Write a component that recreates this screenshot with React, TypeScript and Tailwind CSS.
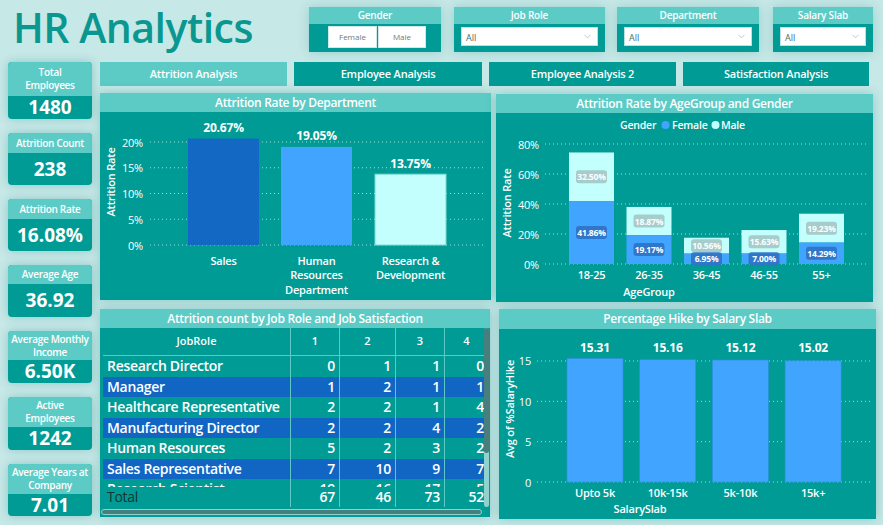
import { ChevronDown } from "lucide-react";

const kpis = [
  { label: ["Total", "Employees"], value: "1480", card: "h-[57px]", head: "h-[34px]" },
  { label: ["Attrition Count"], value: "238", card: "h-[52px]", head: "h-[20px]" },
  { label: ["Attrition Rate"], value: "16.08%", card: "h-[52px]", head: "h-[20px]" },
  { label: ["Average Age"], value: "36.92", card: "h-[52px]", head: "h-[19px]" },
  { label: ["Average Monthly", "Income"], value: "6.50K", card: "h-[52px]", head: "h-[29px]" },
  { label: ["Active", "Employees"], value: "1242", card: "h-[53px]", head: "h-[30px]" },
  { label: ["Average Years at", "Company"], value: "7.01", card: "h-[52px]", head: "h-[30px]" },
];

const tableRows = [
  { role: "Research Director", v: [0, 1, 1, 0] },
  { role: "Manager", v: [1, 2, 1, 1] },
  { role: "Healthcare Representative", v: [2, 2, 1, 4] },
  { role: "Manufacturing Director", v: [2, 2, 4, 2] },
  { role: "Human Resources", v: [5, 2, 3, 2] },
  { role: "Sales Representative", v: [7, 10, 9, 7] },
  { role: "Research Scientist", v: [19, 16, 17, 5] },
];

function Filter({ label, width, children }: { label: string; width: string; children: React.ReactNode }) {
  return (
    <div className={`${width} h-[45px] flex flex-col shadow-[0_0_10px_rgba(0,130,125,0.25)]`}>
      <div className="h-[17px] bg-[#5ccbc6] text-white text-[10px] font-semibold tracking-[-0.2px] flex items-center justify-center">{label}</div>
      <div className="flex-1 bg-[#019b95] px-[7px] pt-[3px]">{children}</div>
    </div>
  );
}

function Dropdown() {
  return (
    <div className="h-[19px] bg-white border border-[#b9e3e1] flex items-center justify-between pl-[4px] pr-[4px]">
      <span className="text-[9px] text-[#3f6f6f] mt-[2px]">All</span>
      <ChevronDown className="w-[11px] h-[11px] text-[#9ab8b8]" strokeWidth={1.5} />
    </div>
  );
}

function Panel({ title, className, head, children }: { title: string; className: string; head: string; children: React.ReactNode }) {
  return (
    <div className={`${className} flex flex-col bg-[#019b95] shadow-[0_0_10px_rgba(0,130,125,0.3)]`}>
      <div className={`${head} bg-[#5ccbc6] text-white text-[12px] font-semibold tracking-[-0.3px] flex items-center justify-center shrink-0`}>{title}</div>
      <div className="flex-1 relative">{children}</div>
    </div>
  );
}

function DeptChart() {
  const y0 = 133;
  const k = 5.15;
  const bars = [
    { x: 88, v: 20.67, fill: "#1268c3", lines: ["Sales"] },
    { x: 181, v: 19.05, fill: "#41a4ff", lines: ["Human", "Resources", "Department"] },
    { x: 275, v: 13.75, fill: "#c2fffd", lines: ["Research &", "Development"] },
  ];
  return (
    <svg width="391" height="187" className="block tracking-[-0.2px]">
      <text transform="translate(10,70) rotate(-90)" textAnchor="middle" dominantBaseline="central" fill="white" fontSize="11" fontWeight="600">Attrition Rate</text>
      {[0, 5, 10, 15, 20].map((t) => (
        <g key={t}>
          <line x1="50" x2="386" y1={y0 - t * k} y2={y0 - t * k} stroke="#9fdcd8" strokeDasharray="1 3" />
          <text x="43" y={y0 - t * k} textAnchor="end" dominantBaseline="central" fill="white" fontSize="11">{t}%</text>
        </g>
      ))}
      {bars.map((b) => (
        <g key={b.x}>
          <rect x={b.x} y={y0 - b.v * k} width="71" height={b.v * k} fill={b.fill} stroke={b.fill === "#c2fffd" ? "#7fd9d4" : "none"} />
          <text x={b.x + 35.5} y={y0 - b.v * k - 11} textAnchor="middle" dominantBaseline="central" fill="white" fontSize="12" fontWeight="700">{b.v.toFixed(2)}%</text>
          {b.lines.map((l, i) => (
            <text key={l} x={b.x + 35.5} y={148 + i * 14.5} textAnchor="middle" dominantBaseline="central" fill="white" fontSize="11" fontWeight="600">{l}</text>
          ))}
        </g>
      ))}
    </svg>
  );
}

function AgeChart() {
  const y0 = 151;
  const k = 1.5;
  const groups = [
    { g: "18-25", f: 41.86, m: 32.5 },
    { g: "26-35", f: 19.17, m: 18.87 },
    { g: "36-45", f: 6.95, m: 10.56 },
    { g: "46-55", f: 7.0, m: 15.63 },
    { g: "55+", f: 14.29, m: 19.23 },
  ];
  return (
    <svg width="377" height="188" className="block tracking-[-0.2px]">
      <text x="124" y="12" dominantBaseline="central" fill="white" fontSize="10.5" fontWeight="600">Gender</text>
      <circle cx="169.5" cy="12" r="4" fill="#41a4ff" />
      <text x="176" y="12" dominantBaseline="central" fill="white" fontSize="10.5" fontWeight="600">Female</text>
      <circle cx="219.5" cy="12" r="4" fill="#c2fffd" />
      <text x="225" y="12" dominantBaseline="central" fill="white" fontSize="10.5" fontWeight="600">Male</text>
      <text transform="translate(10,90) rotate(-90)" textAnchor="middle" dominantBaseline="central" fill="white" fontSize="11" fontWeight="600">Attrition Rate</text>
      {[0, 20, 40, 60, 80].map((t) => (
        <g key={t}>
          <line x1="49" x2="373" y1={y0 - t * k} y2={y0 - t * k} stroke="#9fdcd8" strokeDasharray="1 3" />
          <text x="43" y={y0 - t * k} textAnchor="end" dominantBaseline="central" fill="white" fontSize="11">{t}%</text>
        </g>
      ))}
      {groups.map((d, i) => {
        const x = 73 + i * 57.5;
        const fTop = y0 - d.f * k;
        const mTop = fTop - d.m * k;
        return (
          <g key={d.g}>
            <rect x={x} y={mTop} width="45" height={d.m * k} fill="#c2fffd" />
            <rect x={x} y={fTop} width="45" height={d.f * k} fill="#41a4ff" />
            <rect x={x + 7} y={(mTop + fTop) / 2 - 6.5} width="31" height="13" rx="3" fill="#a3c6c6" fillOpacity="0.9" />
            <text x={x + 22.5} y={(mTop + fTop) / 2} textAnchor="middle" dominantBaseline="central" fill="white" fontSize="8.5" fontWeight="700">{d.m.toFixed(2)}%</text>
            <rect x={x + 7} y={(fTop + y0) / 2 - 6.5} width="31" height="13" rx="3" fill="#2f72c4" fillOpacity="0.9" />
            <text x={x + 22.5} y={(fTop + y0) / 2} textAnchor="middle" dominantBaseline="central" fill="white" fontSize="8.5" fontWeight="700">{d.f.toFixed(2)}%</text>
            <text x={x + 22.5} y="161" textAnchor="middle" dominantBaseline="central" fill="white" fontSize="11" fontWeight="600">{d.g}</text>
          </g>
        );
      })}
      <text x="153" y="178" textAnchor="middle" dominantBaseline="central" fill="white" fontSize="11" fontWeight="600">AgeGroup</text>
    </svg>
  );
}

function HikeChart() {
  const y0 = 153;
  const k = 8.067;
  const bars = [
    { s: "Upto 5k", v: 15.31 },
    { s: "10k-15k", v: 15.16 },
    { s: "5k-10k", v: 15.12 },
    { s: "15k+", v: 15.02 },
  ];
  return (
    <svg width="377" height="190" className="block tracking-[-0.2px]">
      <text transform="translate(10,80) rotate(-90)" textAnchor="middle" dominantBaseline="central" fill="white" fontSize="11" fontWeight="600">Avg of %SalaryHike</text>
      {[0, 5, 10, 15].map((t) => (
        <g key={t}>
          <line x1="38" x2="371" y1={y0 - t * k} y2={y0 - t * k} stroke="#9fdcd8" strokeDasharray="1 3" />
          <text x="32" y={y0 - t * k} textAnchor="end" dominantBaseline="central" fill="white" fontSize="11">{t}</text>
        </g>
      ))}
      {bars.map((b, i) => {
        const x = 68 + i * 72.7;
        return (
          <g key={b.s}>
            <rect x={x} y={y0 - b.v * k} width="56" height={b.v * k} fill="#41a4ff" stroke="#2f8fe0" strokeWidth="0.6" />
            <text x={x + 28} y="18" textAnchor="middle" dominantBaseline="central" fill="white" fontSize="12" fontWeight="700">{b.v.toFixed(2)}</text>
            <text x={x + 28} y="163" textAnchor="middle" dominantBaseline="central" fill="white" fontSize="11" fontWeight="600">{b.s}</text>
          </g>
        );
      })}
      <text x="141" y="179" textAnchor="middle" dominantBaseline="central" fill="white" fontSize="11" fontWeight="600">SalarySlab</text>
    </svg>
  );
}

function JobTable() {
  return (
    <div className="absolute inset-0 pl-[3px]">
      <div className="flex">
        <div className="w-[381px] h-[179px] overflow-hidden">
          <div className="grid grid-cols-[187px_49px_56px_49px_44px] h-[28px] border-b border-[#5cc9c4] text-white text-[11px] font-semibold">
            <div className="flex items-center justify-center">JobRole</div>
            {[1, 2, 3, 4].map((c) => (
              <div key={c} className="flex items-center justify-center border-l border-[#5cc9c4]">{c}</div>
            ))}
          </div>
          <div className="h-[131px] overflow-hidden">
            {tableRows.map((r, i) => (
              <div key={r.role} className={`grid grid-cols-[187px_49px_56px_49px_44px] h-[20.5px] text-white text-[14px] font-semibold tracking-[-0.3px] leading-none whitespace-nowrap ${i % 2 === 1 ? "bg-[#1166c4]" : ""}`}>
                <div className="flex items-center pl-[4px]">{r.role}</div>
                {r.v.map((n, j) => (
                  <div key={j} className="flex items-center justify-end pr-[4px] border-l border-[#5cc9c4]">{n}</div>
                ))}
              </div>
            ))}
          </div>
          <div className="grid grid-cols-[187px_49px_56px_49px_44px] h-[20px] text-[14px] tracking-[-0.3px] leading-none">
            <div className="flex items-center pl-[4px] text-[#163434]">Total</div>
            {[67, 46, 73, 52].map((n) => (
              <div key={n} className="flex items-center justify-end pr-[4px] border-l border-[#5cc9c4] text-white font-semibold">{n}</div>
            ))}
          </div>
        </div>
        <div className="w-[5px] h-[179px] rounded-full bg-[#8fd3cf] flex flex-col">
          <div className="h-[125px] rounded-full bg-[#467f7e]" />
        </div>
      </div>
      <div className="mt-[2px] w-[381px] h-[6px] rounded-full bg-[#467f7e] border border-[#8fd3cf] -ml-[2px]" />
    </div>
  );
}

export default function App() {
  return (
    <div className="w-[883px] h-[525px] overflow-hidden bg-[#c6e8e7] font-['Open_Sans',sans-serif]">
      <div className="h-[62px] flex items-start">
        <div className="w-[309px] pl-[13px] pt-[2px] text-[41px] leading-[50px] font-semibold text-[#0a9790] tracking-[-0.5px] whitespace-nowrap">HR Analytics</div>
        <div className="flex pt-[7px]">
          <Filter label="Gender" width="w-[132px]">
            <div className="flex justify-center gap-[1px] -mt-[1px] ml-[4px]">
              <div className="w-[49px] h-[22px] bg-white border border-[#cfe9e8] flex items-center justify-center text-[8px] text-[#6b7c7c]">Female</div>
              <div className="w-[48px] h-[22px] bg-white border border-[#cfe9e8] flex items-center justify-center text-[8px] text-[#6b7c7c]">Male</div>
            </div>
          </Filter>
          <div className="w-[13px]" />
          <Filter label="Job Role" width="w-[151px]">
            <Dropdown />
          </Filter>
          <div className="w-[12px]" />
          <Filter label="Department" width="w-[142px]">
            <Dropdown />
          </Filter>
          <div className="w-[14px]" />
          <Filter label="Salary Slab" width="w-[100px]">
            <Dropdown />
          </Filter>
        </div>
      </div>

      <div className="flex gap-[8px] pl-[8px]">
        <div className="w-[84px] flex flex-col gap-[14px]">
          {kpis.map((k) => (
            <div key={k.value} className={`${k.card} rounded-[4px] overflow-hidden flex flex-col bg-[#019b95] shadow-[0_0_10px_rgba(0,130,125,0.3)]`}>
              <div className={`${k.head} bg-[#5ccbc6] text-white text-[10px] font-semibold tracking-[-0.3px] leading-[13px] text-center flex flex-col items-center justify-center`}>
                {k.label.map((l) => (
                  <span key={l}>{l}</span>
                ))}
              </div>
              <div className="flex-1 flex items-center justify-center text-white text-[19px] font-bold leading-none">{k.value}</div>
            </div>
          ))}
        </div>

        <div className="w-[776px] flex flex-col">
          <div className="flex gap-[7px] h-[24px]">
            <div className="w-[187px] bg-[#5ccbc6] text-white text-[11px] font-semibold tracking-[-0.2px] flex items-center justify-center">Attrition Analysis</div>
            <div className="w-[188px] bg-[#019b95] text-white text-[11px] font-semibold tracking-[-0.2px] flex items-center justify-center">Employee Analysis</div>
            <div className="w-[187px] bg-[#019b95] text-white text-[11px] font-semibold tracking-[-0.2px] flex items-center justify-center">Employee Analysis 2</div>
            <div className="w-[186px] bg-[#019b95] text-white text-[11px] font-semibold tracking-[-0.2px] flex items-center justify-center">Satisfaction Analysis</div>
          </div>

          <div className="flex gap-[5px] mt-[7px] items-start">
            <Panel title="Attrition Rate by Department" className="w-[391px] h-[207px]" head="h-[19px]">
              <DeptChart />
            </Panel>
            <Panel title="Attrition Rate by AgeGroup and Gender" className="w-[377px] h-[208px] mt-[1px]" head="h-[19px]">
              <AgeChart />
            </Panel>
          </div>

          <div className="flex gap-[9px] mt-[7px] items-start">
            <Panel title="Attrition count by Job Role and Job Satisfaction" className="w-[390px] h-[208px]" head="h-[19px]">
              <JobTable />
            </Panel>
            <Panel title="Percentage Hike by Salary Slab" className="w-[377px] h-[210px]" head="h-[20px]">
              <HikeChart />
            </Panel>
          </div>
        </div>
      </div>
    </div>
  );
}
